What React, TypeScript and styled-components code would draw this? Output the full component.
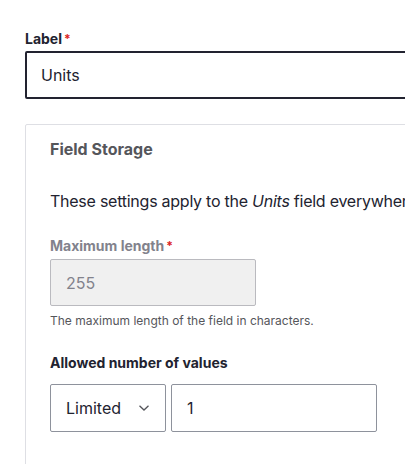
import styled, { createGlobalStyle } from 'styled-components';

const GlobalStyle = createGlobalStyle`
  html, body {
    margin: 0;
    padding: 0;
    background: #ffffff;
    overflow: hidden;
  }
  body {
    font-family: Inter, "Liberation Sans", Arial, sans-serif;
    color: #222330;
  }
`;

const Page = styled.div`
  width: 405px;
  height: 464px;
  padding: 30px 0 0 25px;
  box-sizing: border-box;
  overflow: hidden;
`;

const Label = styled.div<{ $muted?: boolean }>`
  font-size: 14px;
  line-height: 18px;
  font-weight: 700;
  color: ${(p) => (p.$muted ? '#82828c' : '#222330')};
  margin-bottom: ${(p) => (p.$muted ? '4px' : '3px')};
`;

const Required = styled.span`
  color: #dc2323;
  margin-left: 2px;
  font-size: 12px;
  vertical-align: top;
`;

const TextInput = styled.div<{ $width: number; $variant?: 'focus' | 'disabled' }>`
  box-sizing: border-box;
  width: ${(p) => p.$width}px;
  height: ${(p) => (p.$variant === 'disabled' ? 47 : 48)}px;
  display: flex;
  align-items: center;
  padding-left: ${(p) => (p.$variant === 'focus' ? 14 : 15)}px;
  font-size: 16px;
  border-radius: 2px;
  flex-shrink: 0;
  border: ${(p) =>
    p.$variant === 'focus'
      ? '2px solid #222330'
      : p.$variant === 'disabled'
      ? '1px solid #bababf'
      : '1px solid #8e929c'};
  background: ${(p) => (p.$variant === 'disabled' ? '#f0f0f0' : '#ffffff')};
  color: ${(p) => (p.$variant === 'disabled' ? '#82828c' : '#222330')};
`;

const Card = styled.div`
  margin-top: 25px;
  width: 420px;
  border: 1px solid #dedfe4;
  border-radius: 2px;
  padding: 14px 0 40px 24px;
  box-sizing: border-box;
`;

const CardTitle = styled.div`
  font-size: 16px;
  line-height: 20px;
  font-weight: 700;
  color: #55565b;
  margin-bottom: 30px;
`;

const Intro = styled.div`
  font-size: 16px;
  line-height: 24px;
  letter-spacing: -0.25px;
  white-space: nowrap;
  margin-bottom: 24px;
`;

const Description = styled.div`
  font-size: 12px;
  line-height: 16px;
  color: #55565b;
  margin-top: 7px;
  margin-bottom: 25px;
`;

const Row = styled.div`
  display: flex;
  gap: 5px;
  margin-top: 12px;
`;

const Select = styled.div`
  box-sizing: border-box;
  width: 116px;
  height: 48px;
  border: 1px solid #8e929c;
  border-radius: 2px;
  display: flex;
  align-items: center;
  justify-content: space-between;
  padding: 0 15px;
  font-size: 16px;
  color: #222330;
`;

const Chevron = () => (
  <svg width="12" height="8" viewBox="0 0 12 8" fill="none">
    <path d="M1.5 1.8 L6 6 L10.5 1.8" stroke="#55565b" strokeWidth="1.3" />
  </svg>
);

export default function App() {
  return (
    <Page>
      <GlobalStyle />
      <Label>
        Label<Required>*</Required>
      </Label>
      <TextInput $width={400} $variant="focus">
        Units
      </TextInput>
      <Card>
        <CardTitle>Field Storage</CardTitle>
        <Intro>
          These settings apply to the <em>Units</em> field everywhere it is used.
        </Intro>
        <Label $muted>
          Maximum length<Required>*</Required>
        </Label>
        <TextInput $width={206} $variant="disabled">
          255
        </TextInput>
        <Description>The maximum length of the field in characters.</Description>
        <Label>Allowed number of values</Label>
        <Row>
          <Select>
            Limited
            <Chevron />
          </Select>
          <TextInput $width={206}>1</TextInput>
        </Row>
      </Card>
    </Page>
  );
}
